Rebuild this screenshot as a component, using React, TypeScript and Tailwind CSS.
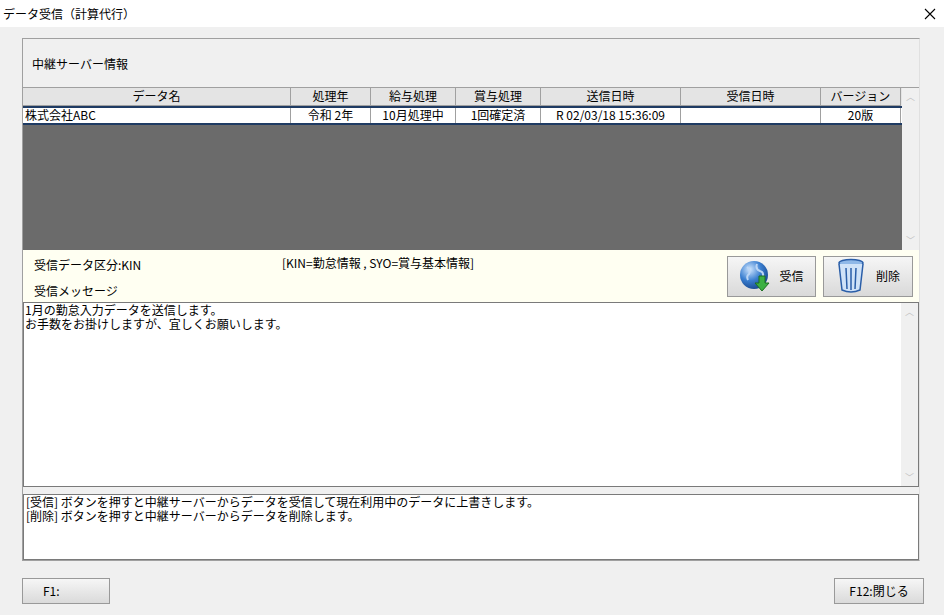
import React from "react";

const cols = [
  { t: "データ名", w: 268 },
  { t: "処理年", w: 80 },
  { t: "給与処理", w: 85 },
  { t: "賞与処理", w: 85 },
  { t: "送信日時", w: 140 },
  { t: "受信日時", w: 140 },
  { t: "バージョン", w: 80 },
];
const row = ["株式会社ABC", "令和  2年", "10月処理中", "1回確定済", "R 02/03/18 15:36:09", "", "20版"];

function Globe() {
  return (
    <svg width="34" height="34" viewBox="0 0 34 34">
      <defs>
        <radialGradient id="g" cx="0.35" cy="0.3" r="0.8">
          <stop offset="0" stopColor="#cfe6ff" />
          <stop offset="0.5" stopColor="#3b7fd0" />
          <stop offset="1" stopColor="#123f85" />
        </radialGradient>
      </defs>
      <circle cx="15" cy="16" r="14" fill="url(#g)" />
      <path d="M8 8 q4 3 2 7 q-3 2 -1 6 M18 5 q-2 5 3 7 q4 1 3 6" stroke="#bcd6f5" strokeWidth="2" fill="none" />
      <path d="M20 17 h6 v7 h4 l-7 8 l-7 -8 h4 z" fill="#3cb043" stroke="#1d6e22" strokeWidth="1" />
    </svg>
  );
}
function Trash() {
  return (
    <svg width="30" height="36" viewBox="0 0 30 36">
      <ellipse cx="15" cy="5" rx="12" ry="3.5" fill="#8fb8e8" stroke="#2a5ea8" strokeWidth="1.5" />
      <path d="M3 6 L6 32 Q15 36 24 32 L27 6" fill="#cfe2f8" stroke="#2a5ea8" strokeWidth="1.5" />
      <path d="M10 10 L11 31 M15 10 V32 M20 10 L19 31" stroke="#2a5ea8" strokeWidth="1.5" />
    </svg>
  );
}

export default function App() {
  const f = { fontFamily: '"Noto Sans CJK JP", "Liberation Sans", sans-serif' };
  return (
    <div style={f} className="w-[944px] h-[615px] bg-[#f0f0f0] text-[12px] text-black overflow-hidden flex flex-col">
      <div className="h-[27px] bg-white flex items-center justify-between pl-[3px] pr-[8px] shrink-0">
        <span className="text-[12px]">データ受信（計算代行）</span>
        <svg width="12" height="12" viewBox="0 0 12 12"><path d="M1 1 L11 11 M11 1 L1 11" stroke="#000" strokeWidth="1.1" /></svg>
      </div>
      <div className="pl-[22px] pr-[24px] pt-[11px]">
        <div className="border border-[#a0a0a0] border-r-[#e0e0e0] h-[523px] flex flex-col">
          <div className="h-[48px] flex items-center pl-[9px] pt-[3px]">中継サーバー情報</div>
          <div className="h-[163px] bg-[#6b6b6b] flex border-t border-[#a0a0a0]">
            <div className="flex-1 flex flex-col">
              <div className="flex h-[18px] bg-[#e4e4e4]">
                {cols.map((c, i) => (
                  <div key={i} style={{ width: c.w }} className="border-r border-b border-[#a0a0a0] flex items-center justify-center leading-none">{c.t}</div>
                ))}
              </div>
              <div className="flex h-[19px] bg-white border-y-2 border-[#1f3b63]">
                {row.map((v, i) => (
                  <div key={i} style={{ width: cols[i].w }} className={`border-r border-[#a0a0a0] flex items-center leading-none ${i === 0 ? "pl-[2px]" : "justify-center"}`}>{v}</div>
                ))}
              </div>
            </div>
            <div className="w-[17px] bg-[#f0f0f0] flex flex-col justify-between items-center text-[9px] text-[#c0c0c0] py-[2px]">
              <span>︿</span><span>﹀</span>
            </div>
          </div>
          <div className="h-[52px] bg-[#fffff2] flex items-start relative">
            <div className="pl-[11px] pt-[6px] flex flex-col gap-[8px]">
              <span>受信データ区分:KIN</span>
              <span>受信メッセージ</span>
            </div>
            <span className="absolute left-[259px] top-[4px]">[KIN=勤怠情報 , SYO=賞与基本情報]</span>
            <div className="ml-auto mr-[6px] mt-[6px] flex gap-[7px]">
              <button className="w-[89px] h-[41px] border border-[#999] bg-gradient-to-b from-[#f6f6f6] to-[#d9d9d9] flex items-center justify-center gap-[6px]"><Globe /><span>受信</span></button>
              <button className="w-[90px] h-[41px] border border-[#999] bg-gradient-to-b from-[#f6f6f6] to-[#d9d9d9] flex items-center justify-center gap-[10px]"><Trash /><span>削除</span></button>
            </div>
          </div>
          <div className="h-[186px] bg-white border border-[#7a7a7a] flex">
            <div className="flex-1 pl-[1px] leading-[14px] flex flex-col items-start">
              <span>1月の勤怠入力データを送信します。</span>
              <span>お手数をお掛けしますが、宜しくお願いします。</span>
            </div>
            <div className="w-[17px] bg-[#f0f0f0] flex flex-col justify-between items-center text-[9px] text-[#c0c0c0] py-[2px]">
              <span>︿</span><span>﹀</span>
            </div>
          </div>
          <div className="h-[7px]" />
          <div className="h-[66px] bg-white border border-[#7a7a7a] pl-[2px] leading-[14px] flex flex-col items-start">
            <span>[受信] ボタンを押すと中継サーバーからデータを受信して現在利用中のデータに上書きします。</span>
            <span>[削除] ボタンを押すと中継サーバーからデータを削除します。</span>
          </div>
        </div>
      </div>
      <div className="flex justify-between pl-[22px] pr-[20px] mt-[17px]">
        <button className="w-[88px] h-[26px] border border-[#999] bg-gradient-to-b from-[#f6f6f6] to-[#dadada] text-left pl-[20px]">F1:</button>
        <button className="w-[90px] h-[26px] border border-[#999] bg-gradient-to-b from-[#f6f6f6] to-[#dadada]">F12:閉じる</button>
      </div>
    </div>
  );
}
